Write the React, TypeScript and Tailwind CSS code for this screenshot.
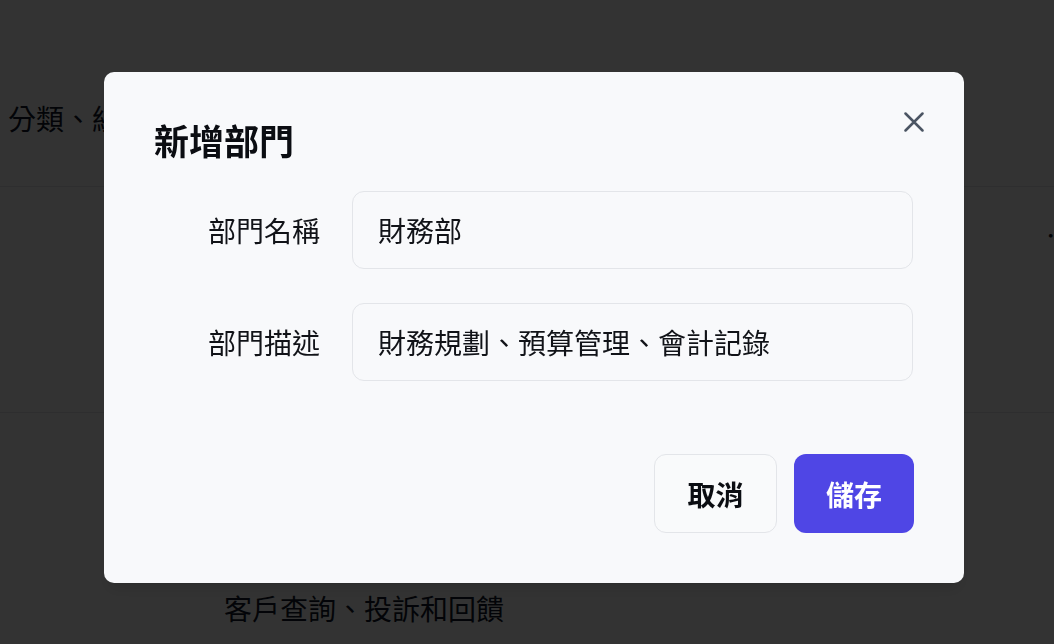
import { useState } from "react";

const font = {
  fontFamily: '"Noto Sans CJK TC", "Noto Sans", sans-serif',
};

const DepartmentModal = ({ onClose }: { onClose: () => void }) => {
  const [name, setName] = useState("財務部");
  const [desc, setDesc] = useState("財務規劃、預算管理、會計記錄");

  return (
    <div className="fixed inset-0 bg-black/80 pl-[104px] pt-[72px]">
      <div className="relative w-[860px] h-[511px] rounded-[10px] bg-[#f8f9fb] px-[50px] pt-[48px] pb-[50px] shadow-lg flex flex-col">
        <button
          onClick={onClose}
          className="absolute right-[40px] top-[40px] w-[20px] h-[20px] text-[#4b5563]"
          aria-label="關閉"
        >
          <svg viewBox="0 0 20 20" className="w-[20px] h-[20px]" fill="none" stroke="currentColor" strokeWidth={2.5} strokeLinecap="round">
            <path d="M1.5 1.5l17 17M18.5 1.5l-17 17" />
          </svg>
        </button>

        <h2 className="h-[40px] text-[35px] leading-[40px] font-bold text-[#0b0d12]">新增部門</h2>

        <div className="mt-[31px] flex flex-col gap-[34px]">
          <div className="flex items-center">
            <label className="w-[166px] text-right text-[28px] text-[#111318]">部門名稱</label>
            <input
              value={name}
              onChange={(e) => setName(e.target.value)}
              className="ml-[32px] w-[561px] h-[78px] rounded-[12px] border-[1.5px] border-[#e3e5e9] bg-[#f8f9fb] px-[25px] text-[28px] text-[#111318] outline-none"
              style={font}
            />
          </div>
          <div className="flex items-center">
            <label className="w-[166px] text-right text-[28px] text-[#111318]">部門描述</label>
            <input
              value={desc}
              onChange={(e) => setDesc(e.target.value)}
              className="ml-[32px] w-[561px] h-[78px] rounded-[12px] border-[1.5px] border-[#e3e5e9] bg-[#f8f9fb] px-[25px] text-[28px] text-[#111318] outline-none"
              style={font}
            />
          </div>
        </div>

        <div className="mt-auto flex justify-end gap-[17px]">
          <button
            onClick={onClose}
            className="w-[123px] h-[79px] rounded-[12px] border-[1.5px] border-[#e3e5e9] bg-[#f9fafb] text-[28px] font-bold text-[#0b0d12]"
            style={font}
          >
            取消
          </button>
          <button
            className="w-[120px] h-[79px] rounded-[12px] bg-[#4f46e5] text-[28px] font-bold text-white"
            style={font}
          >
            儲存
          </button>
        </div>
      </div>
    </div>
  );
};

export default function App() {
  const [open, setOpen] = useState(true);

  return (
    <div className="relative h-[644px] w-full overflow-hidden bg-white text-gray-900" style={font}>
      <div className="h-[187px] border-b border-gray-200 pt-[100px] pl-[8px]">
        <p className="w-[96px] overflow-hidden text-[28px] leading-[36px] whitespace-nowrap">分類、組織架構與職責說明</p>
      </div>
      <div className="h-[226px] border-b border-gray-200 flex justify-end pt-[30px]">
        <span className="text-[28px] leading-[36px] mr-[-20px]">⋯</span>
      </div>
      <div className="pt-[177px] pl-[224px]">
        <p className="text-[28px] leading-[36px] whitespace-nowrap">客戶查詢、投訴和回饋</p>
      </div>

      {open && <DepartmentModal onClose={() => setOpen(false)} />}
    </div>
  );
}
